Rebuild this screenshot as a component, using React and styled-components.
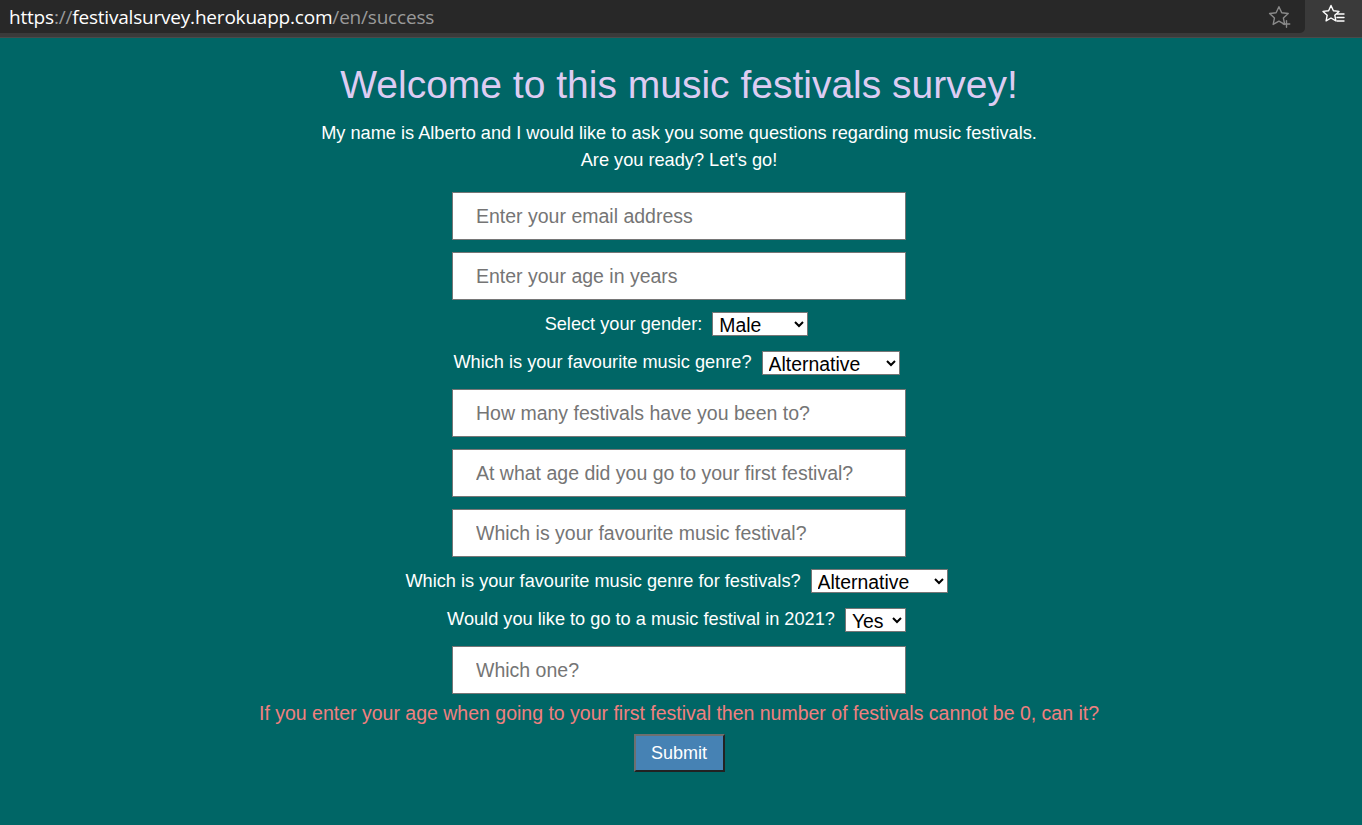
import React from "react";
import styled, { createGlobalStyle } from "styled-components";

const Global = createGlobalStyle`
  html, body { margin: 0; padding: 0; background: #006666; }
  body { font-family: "Liberation Sans", Arial, sans-serif; }
`;

const Page = styled.div`
  min-height: 825px;
  background: #006666;
  display: flex;
  flex-direction: column;
`;

const Chrome = styled.div`
  height: 38px;
  background: #3a3a3a;
  display: flex;
  align-items: flex-start;
  border-bottom: 1px solid #4a4a4a;
  box-sizing: border-box;
`;

const AddressBar = styled.div`
  width: 1305px;
  height: 33px;
  background: #282828;
  border-bottom-right-radius: 5px;
  display: flex;
  align-items: center;
  padding-left: 9px;
  box-sizing: border-box;
  font-family: "Open Sans", "Noto Sans", sans-serif;
  font-size: 19px;
  letter-spacing: -0.2px;
  position: relative;
`;

const UrlPart = styled.span`
  color: ${(p) => p.$c};
`;

const StarWrap = styled.div`
  position: absolute;
  right: 12px;
  top: 4px;
  width: 26px;
  height: 26px;
`;

const FavWrap = styled.div`
  width: 57px;
  display: flex;
  justify-content: center;
  padding-top: 3px;
`;

const Main = styled.main`
  display: flex;
  flex-direction: column;
  align-items: center;
  padding-top: 24px;
  padding-right: 4px;
`;

const Title = styled.h1`
  margin: 0;
  font-weight: normal;
  font-size: 39px;
  line-height: 46px;
  color: #ddccf2;
`;

const Intro = styled.p`
  margin: 12px 0 0;
  color: #ffffff;
  font-size: 18.2px;
  line-height: 27px;
  text-align: center;
`;

const Form = styled.form`
  display: flex;
  flex-direction: column;
  align-items: center;
  margin-top: 12px;
`;

const TextInput = styled.input`
  box-sizing: border-box;
  width: 454px;
  height: 48px;
  margin: 6px 0;
  padding: 0 23px;
  border: 1px solid #767676;
  background: #fff;
  font-family: "Liberation Sans", Arial, sans-serif;
  font-size: 19.5px;
  color: #222;
  outline: none;
  &::placeholder { color: #757575; }
`;

const Row = styled.div`
  display: flex;
  align-items: center;
  gap: 10px;
  height: 24px;
  margin: 6px 0 8.5px;
  padding-right: 5px;
`;

const Label = styled.label`
  color: #ffffff;
  font-size: 18.2px;
`;

const Select = styled.select`
  box-sizing: border-box;
  width: ${(p) => p.$w}px;
  height: 24px;
  border: 1px solid #767676;
  border-radius: 0;
  background: #fff;
  color: #000;
  font-family: "Liberation Sans", Arial, sans-serif;
  font-size: 19.4px;
  padding: 0 2px;
`;

const ErrorText = styled.p`
  margin: 1px 0 0;
  color: #f08080;
  font-size: 19.5px;
  line-height: 24px;
`;

const Submit = styled.button`
  margin-top: 9px;
  width: 91px;
  height: 38px;
  background: #4682b4;
  color: #fff;
  font-family: "Liberation Sans", Arial, sans-serif;
  font-size: 18px;
  border: 2px solid;
  border-color: #6f6f6f #222 #222 #6f6f6f;
  padding: 0;
`;

function StarPlus() {
  return (
    <svg width="26" height="26" viewBox="0 0 24 24" fill="none" stroke="#8a8a8a" strokeWidth="1.3" strokeLinejoin="round">
      <path d="M11 2.5l2.6 5.6 6 .7-4.5 4.1 1.2 6-5.3-3-5.3 3 1.2-6L2.4 8.8l6-.7z" />
      <path d="M18 15.5v6M15 18.5h6" strokeLinecap="round" />
    </svg>
  );
}

function FavList() {
  return (
    <svg width="26" height="24" viewBox="0 0 26 24" fill="none" stroke="#ffffff" strokeWidth="1.4" strokeLinejoin="round">
      <path d="M10 2.5l2.4 5.3 5.6.6-4.2 3.8 1.1 5.6-4.9-2.8-4.9 2.8 1.1-5.6L2 8.4l5.6-.6z" />
      <path d="M16 11h7M16 14.5h7M16 18h7" strokeLinecap="round" />
    </svg>
  );
}

const genres = ["Alternative", "Electronic", "Hip Hop", "Indie", "Pop", "Rock"];

export default function App() {
  return (
    <Page>
      <Global />
      <Chrome>
        <AddressBar>
          <UrlPart $c="#ffffff">https</UrlPart>
          <UrlPart $c="#9a9a9a">://</UrlPart>
          <UrlPart $c="#ffffff">festivalsurvey.herokuapp.com</UrlPart>
          <UrlPart $c="#9a9a9a">/en/success</UrlPart>
          <StarWrap>
            <StarPlus />
          </StarWrap>
        </AddressBar>
        <FavWrap>
          <FavList />
        </FavWrap>
      </Chrome>
      <Main>
        <Title>Welcome to this music festivals survey!</Title>
        <Intro>
          My name is Alberto and I would like to ask you some questions regarding music festivals.
          <br />
          Are you ready? Let's go!
        </Intro>
        <Form onSubmit={(e) => e.preventDefault()}>
          <TextInput type="email" placeholder="Enter your email address" />
          <TextInput type="text" placeholder="Enter your age in years" />
          <Row>
            <Label>Select your gender:</Label>
            <Select $w={96} defaultValue="Male">
              <option>Male</option>
              <option>Female</option>
              <option>Other</option>
            </Select>
          </Row>
          <Row>
            <Label>Which is your favourite music genre?</Label>
            <Select $w={138} defaultValue="Alternative">
              {genres.map((g) => (
                <option key={g}>{g}</option>
              ))}
            </Select>
          </Row>
          <TextInput type="text" placeholder="How many festivals have you been to?" />
          <TextInput type="text" placeholder="At what age did you go to your first festival?" />
          <TextInput type="text" placeholder="Which is your favourite music festival?" />
          <Row>
            <Label>Which is your favourite music genre for festivals?</Label>
            <Select $w={137} defaultValue="Alternative">
              {genres.map((g) => (
                <option key={g}>{g}</option>
              ))}
            </Select>
          </Row>
          <Row>
            <Label>Would you like to go to a music festival in 2021?</Label>
            <Select $w={61} defaultValue="Yes">
              <option>Yes</option>
              <option>No</option>
            </Select>
          </Row>
          <TextInput type="text" placeholder="Which one?" />
          <ErrorText>
            If you enter your age when going to your first festival then number of festivals cannot be 0, can it?
          </ErrorText>
          <Submit type="submit">Submit</Submit>
        </Form>
      </Main>
    </Page>
  );
}
